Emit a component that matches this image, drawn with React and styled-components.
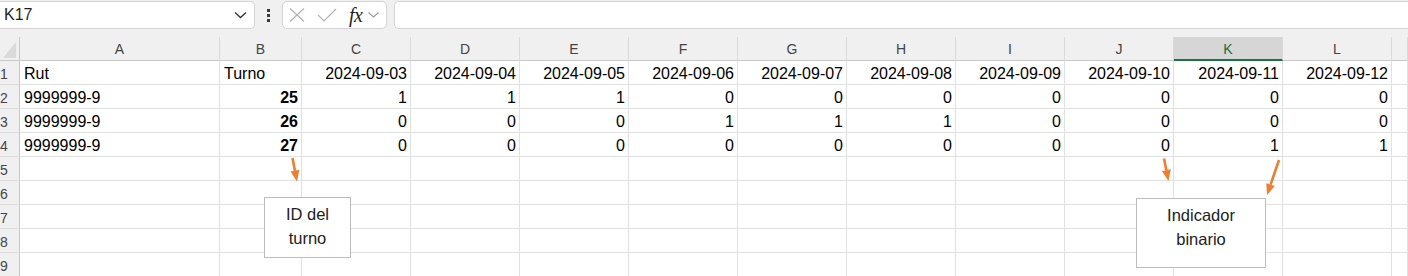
import React from "react";
import styled, { createGlobalStyle } from "styled-components";

const Global = createGlobalStyle`
  html, body { margin: 0; padding: 0; background: #fff; overflow: hidden; }
  body { font-family: "Liberation Sans", Arial, sans-serif; }
  #root { width: 1408px; height: 276px; }
`;

const Page = styled.div`
  position: relative;
  width: 1408px;
  height: 276px;
  overflow: hidden;
  background: #fff;
`;

const Toolbar = styled.div`
  display: flex;
  align-items: flex-start;
  height: 37px;
  box-sizing: border-box;
  padding-top: 1px;
  background: #f0f0f0;
`;

const NameBox = styled.div`
  box-sizing: border-box;
  width: 255px;
  height: 28px;
  background: #fff;
  border: 1px solid #d4d4d4;
  border-left: none;
  border-radius: 0 5px 5px 0;
  display: flex;
  align-items: center;
  justify-content: space-between;
  padding: 0 7px 0 4px;
  font-size: 16px;
  color: #1f1f1f;
`;

const Kebab = styled.div`
  width: 27px;
  height: 28px;
  display: flex;
  flex-direction: column;
  align-items: center;
  justify-content: center;
  gap: 2px;
  span {
    width: 3px;
    height: 3px;
    background: #3a3a3a;
  }
`;

const FxBox = styled.div`
  box-sizing: border-box;
  width: 105px;
  height: 28px;
  margin-right: 7px;
  background: #fff;
  border: 1px solid #d4d4d4;
  border-radius: 5px;
  display: flex;
  align-items: center;
  padding-left: 6px;
  svg { display: block; }
`;

const Fx = styled.span`
  font-family: "Liberation Serif", "Times New Roman", serif;
  font-style: italic;
  font-size: 20px;
  color: #1f1f1f;
  margin-left: 12px;
  letter-spacing: -0.5px;
`;

const Formula = styled.div`
  flex: 1;
  height: 28px;
  box-sizing: border-box;
  background: #fff;
  border: 1px solid #d4d4d4;
  border-right: none;
  border-radius: 5px 0 0 5px;
`;

const Sheet = styled.div`
  display: grid;
  grid-template-columns: 20px 200px 82px repeat(10, 109px) 1fr;
  grid-auto-rows: 24px;
`;

const Corner = styled.div`
  position: relative;
  box-sizing: border-box;
  background: #f0f0f0;
  border-right: 1px solid #c8c8c8;
  border-bottom: 1px solid #c8c8c8;
  &::after {
    content: "";
    position: absolute;
    left: 3px;
    top: 5px;
    width: 13px;
    height: 16px;
    background: #dadada;
    clip-path: polygon(100% 0, 100% 100%, 0 100%);
  }
`;

const ColHead = styled.div`
  box-sizing: border-box;
  background: ${(p) => (p.$selected ? "#d6d6d6" : "#f0f0f0")};
  border-right: 1px solid #dadada;
  border-bottom: ${(p) => (p.$selected ? "2px solid #1e7145" : "1px solid #c8c8c8")};
  display: flex;
  align-items: center;
  justify-content: center;
  padding-top: ${(p) => (p.$selected ? "1px" : "0")};
  font-size: 14px;
  color: ${(p) => (p.$selected ? "#0f703b" : "#444")};
`;

const RowHead = styled.div`
  box-sizing: border-box;
  background: #f0f0f0;
  border-right: 1px solid #c8c8c8;
  border-bottom: 1px solid #dadada;
  overflow: hidden;
  white-space: nowrap;
  text-align: right;
  padding: 2px 13px 0 0;
  line-height: 22px;
  font-size: 14px;
  color: #444;
`;

const Cell = styled.div`
  box-sizing: border-box;
  border-right: 1px solid #e1e1e1;
  border-bottom: 1px solid #e1e1e1;
  padding: 2px 3px 0 4px;
  line-height: 21px;
  font-size: 16px;
  color: #000;
  white-space: nowrap;
  overflow: hidden;
  text-align: ${(p) => (p.$right ? "right" : "left")};
  font-weight: ${(p) => (p.$bold ? 700 : 400)};
`;

const Overlay = styled.svg`
  position: absolute;
  left: 0;
  top: 0;
  pointer-events: none;
`;

const Note = styled.div`
  position: absolute;
  box-sizing: border-box;
  background: #fff;
  border: 1px solid #bdbdbd;
  text-align: center;
  font-size: 16.5px;
  line-height: 24px;
  color: #222;
  padding-top: 4px;
`;

const COLS = ["A", "B", "C", "D", "E", "F", "G", "H", "I", "J", "K", "L", ""];
const dates = ["03", "04", "05", "06", "07", "08", "09", "10", "11", "12"].map(
  (d) => `2024-09-${d}`
);
const rows = [
  { a: "Rut", b: "Turno", bBold: false, bRight: false, vals: dates },
  { a: "9999999-9", b: "25", bBold: true, bRight: true, vals: [1, 1, 1, 0, 0, 0, 0, 0, 0, 0] },
  { a: "9999999-9", b: "26", bBold: true, bRight: true, vals: [0, 0, 0, 1, 1, 1, 0, 0, 0, 0] },
  { a: "9999999-9", b: "27", bBold: true, bRight: true, vals: [0, 0, 0, 0, 0, 0, 0, 0, 1, 1] },
  null,
  null,
  null,
  null,
  null,
];

function Arrow({ x1, y1, x2, y2 }) {
  const dx = x2 - x1;
  const dy = y2 - y1;
  const len = Math.hypot(dx, dy);
  const ux = dx / len;
  const uy = dy / len;
  const hl = 11;
  const hw = 4.5;
  const bx = x2 - ux * hl;
  const by = y2 - uy * hl;
  const px = -uy;
  const py = ux;
  return (
    <g>
      <line x1={x1} y1={y1} x2={bx} y2={by} stroke="#ed7d31" strokeWidth="2.6" />
      <polygon
        points={`${x2},${y2} ${bx + px * hw},${by + py * hw} ${bx - px * hw},${by - py * hw}`}
        fill="#ed7d31"
      />
    </g>
  );
}

export default function App() {
  return (
    <Page>
      <Global />
      <Toolbar>
        <NameBox>
          <span>K17</span>
          <svg width="13" height="8" viewBox="0 0 13 8">
            <path d="M1 1.5 L6.5 6.5 L12 1.5" fill="none" stroke="#333" strokeWidth="1.3" />
          </svg>
        </NameBox>
        <Kebab>
          <span />
          <span />
          <span />
        </Kebab>
        <FxBox>
          <svg width="16" height="14" viewBox="0 0 16 14">
            <path d="M1 0.5 L15 13.5 M15 0.5 L1 13.5" stroke="#b3b3b3" strokeWidth="1.2" fill="none" />
          </svg>
          <svg width="20" height="14" viewBox="0 0 20 14" style={{ marginLeft: 12 }}>
            <path d="M1 7 L7 13 L19 1" stroke="#b3b3b3" strokeWidth="1.2" fill="none" />
          </svg>
          <Fx>fx</Fx>
          <svg width="11" height="6" viewBox="0 0 11 6" style={{ marginLeft: 6 }}>
            <path d="M0.5 0.5 L5.5 5 L10.5 0.5" fill="none" stroke="#9a9a9a" strokeWidth="1.1" />
          </svg>
        </FxBox>
        <Formula />
      </Toolbar>
      <Sheet>
        <Corner />
        {COLS.map((c, i) => (
          <ColHead key={i} $selected={c === "K"}>
            {c}
          </ColHead>
        ))}
        {rows.map((r, ri) => (
          <React.Fragment key={ri}>
            <RowHead>{ri + 1}</RowHead>
            <Cell>{r ? r.a : ""}</Cell>
            <Cell $right={r && r.bRight} $bold={r && r.bBold}>
              {r ? r.b : ""}
            </Cell>
            {Array.from({ length: 10 }).map((_, ci) => (
              <Cell key={ci} $right>
                {r ? r.vals[ci] : ""}
              </Cell>
            ))}
            <Cell />
          </React.Fragment>
        ))}
      </Sheet>
      <Overlay width="1408" height="276" viewBox="0 0 1408 276">
        <Arrow x1={292.5} y1={158} x2={297} y2={181.5} />
        <Arrow x1={1164} y1={158.5} x2={1168.5} y2={181} />
        <Arrow x1={1279} y1={160} x2={1267} y2={195} />
      </Overlay>
      <Note style={{ left: 264, top: 197, width: 87, height: 61 }}>
        ID del
        <br />
        turno
      </Note>
      <Note style={{ left: 1136, top: 198, width: 130, height: 70 }}>
        Indicador
        <br />
        binario
      </Note>
    </Page>
  );
}
